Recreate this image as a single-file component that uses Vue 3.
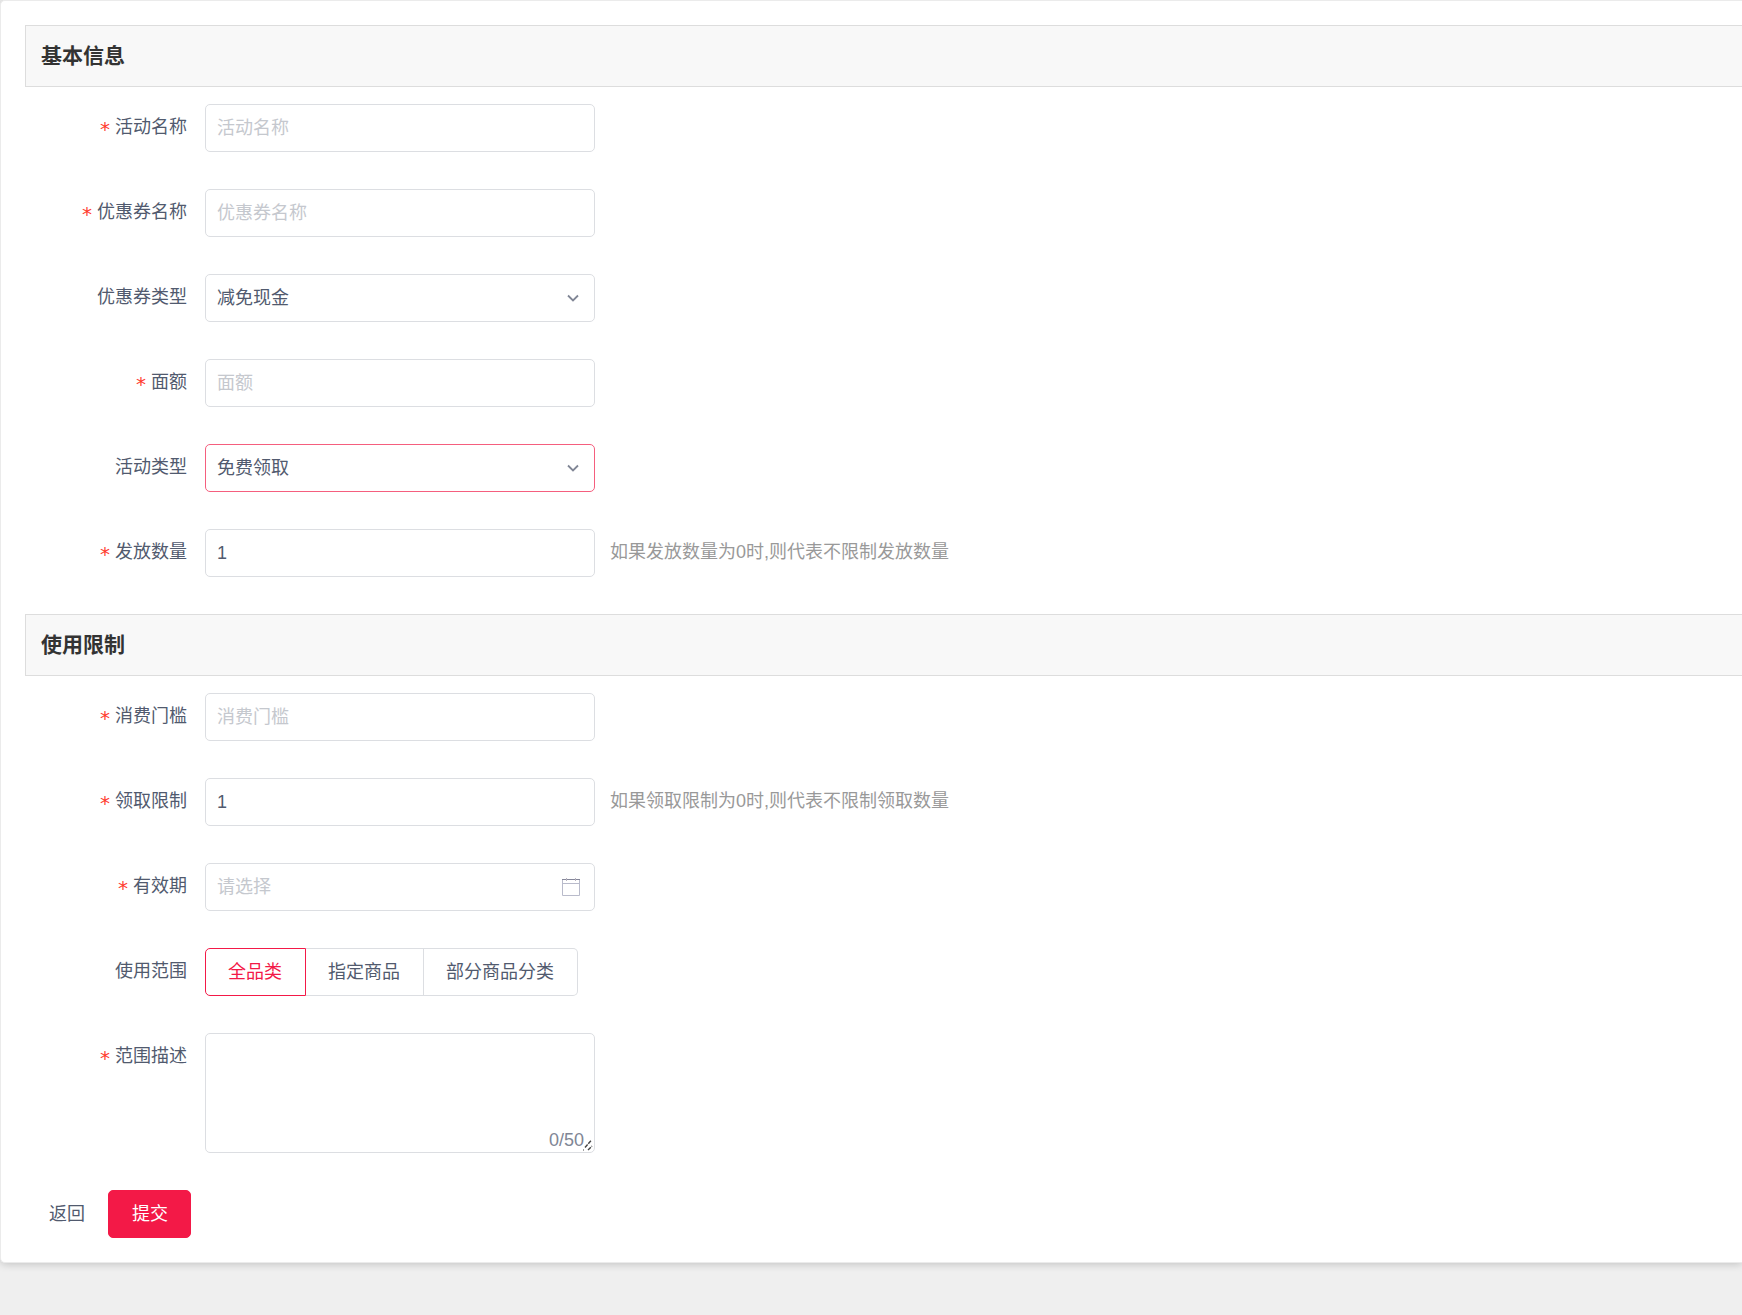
<script setup>
import { reactive } from 'vue'

const form = reactive({
  name: '',
  couponName: '',
  couponType: 'cash',
  amount: '',
  activityType: 'free',
  total: '1',
  threshold: '',
  limit: '1',
  period: '',
  scope: 'all',
  desc: '',
})

const sections = [
  {
    title: '基本信息',
    fields: [
      { key: 'name', label: '活动名称', kind: 'text', required: true, placeholder: '活动名称' },
      { key: 'couponName', label: '优惠券名称', kind: 'text', required: true, placeholder: '优惠券名称' },
      { key: 'couponType', label: '优惠券类型', kind: 'select', options: [{ value: 'cash', label: '减免现金' }] },
      { key: 'amount', label: '面额', kind: 'text', required: true, placeholder: '面额' },
      { key: 'activityType', label: '活动类型', kind: 'select', active: true, options: [{ value: 'free', label: '免费领取' }] },
      { key: 'total', label: '发放数量', kind: 'text', required: true, hint: '如果发放数量为0时,则代表不限制发放数量' },
    ],
  },
  {
    title: '使用限制',
    fields: [
      { key: 'threshold', label: '消费门槛', kind: 'text', required: true, placeholder: '消费门槛' },
      { key: 'limit', label: '领取限制', kind: 'text', required: true, hint: '如果领取限制为0时,则代表不限制领取数量' },
      { key: 'period', label: '有效期', kind: 'date', required: true, placeholder: '请选择' },
      {
        key: 'scope',
        label: '使用范围',
        kind: 'radio',
        options: [
          { value: 'all', label: '全品类' },
          { value: 'goods', label: '指定商品' },
          { value: 'category', label: '部分商品分类' },
        ],
      },
      { key: 'desc', label: '范围描述', kind: 'textarea', required: true },
    ],
  },
]
</script>

<template>
  <div class="page">
    <main class="card">
      <form @submit.prevent>
        <section v-for="section in sections" :key="section.title">
          <h2 class="title">{{ section.title }}</h2>
          <div class="fields">
            <div v-for="f in section.fields" :key="f.key" class="row">
              <span v-if="f.kind === 'radio'" :id="f.key + '-label'" class="label">{{ f.label }}</span>
              <label v-else class="label" :for="f.key"><span v-if="f.required" class="star">*</span>{{ f.label }}</label>

              <div v-if="f.kind === 'radio'" class="radios" role="radiogroup" :aria-labelledby="f.key + '-label'">
                <label v-for="o in f.options" :key="o.value" class="radio" :class="{ checked: form[f.key] === o.value }">
                  <input v-model="form[f.key]" type="radio" :name="f.key" :value="o.value" />{{ o.label }}
                </label>
              </div>

              <div v-else class="control">
                <template v-if="f.kind === 'select'">
                  <select :id="f.key" v-model="form[f.key]" class="box" :class="{ active: f.active }">
                    <option v-for="o in f.options" :key="o.value" :value="o.value">{{ o.label }}</option>
                  </select>
                  <svg class="icon" width="18" height="18" viewBox="0 0 18 18" aria-hidden="true">
                    <path d="M4 6.5 9 11.5 14 6.5" fill="none" stroke="#808695" stroke-width="1.8" />
                  </svg>
                </template>
                <template v-else-if="f.kind === 'textarea'">
                  <textarea :id="f.key" v-model="form[f.key]" class="box area" maxlength="50"></textarea>
                  <span class="count">{{ form[f.key].length }}/50</span>
                  <svg class="grip" width="10" height="12" viewBox="0 0 10 12" aria-hidden="true">
                    <path d="M2 8.5 8.5 1M5 11 9 7" fill="none" stroke="#444" stroke-width="1.4" stroke-dasharray="4 1" />
                    <path d="M0 11h1" stroke="#444" />
                  </svg>
                </template>
                <template v-else>
                  <input :id="f.key" v-model="form[f.key]" class="box" type="text" :placeholder="f.placeholder" />
                  <svg v-if="f.kind === 'date'" class="icon calendar" width="20" height="20" viewBox="0 0 20 20" aria-hidden="true">
                    <path d="M1.5 3V18.5H18.5V3M1 6.5H19" fill="none" stroke="#b9bbcb" />
                    <path d="M1 2.5H19" stroke="#85879a" />
                    <path d="M5.5 1V4M14.5 1V4" stroke="#b9b4bf" />
                  </svg>
                </template>
              </div>
              <span v-if="f.hint" class="hint">{{ f.hint }}</span>
            </div>
          </div>
        </section>

        <div class="actions">
          <button type="button" class="btn">返回</button>
          <button type="submit" class="btn primary">提交</button>
        </div>
      </form>
    </main>
  </div>
</template>

<style>
body {
  background: #efefef;
}
</style>

<style scoped>
.page {
  min-height: 100vh;
  background: #efefef;
}

.card,
.card * {
  box-sizing: border-box;
}

.card {
  padding: 24px 0 24px 24px;
  background: #fff;
  border: 1px solid #ebebeb;
  border-right: 0;
  border-radius: 5px 0 0 5px;
  box-shadow: 0 1px 8px rgba(0, 0, 0, 0.2);
  color: #515a6e;
  font: 18px/46px "Liberation Sans", "Noto Sans CJK SC", sans-serif;
}

.title {
  margin: 0;
  padding: 0 15px;
  background: #f8f8f8;
  border: 1px solid #ddd;
  border-right: 0;
  color: #333;
  font-size: 21px;
  line-height: 60px;
}

.fields {
  display: flex;
  flex-direction: column;
  gap: 37px;
  padding: 17px 0 37px;
}

.row {
  display: flex;
  align-items: flex-start;
}

.label {
  width: 180px;
  padding-right: 18px;
  text-align: right;
}

.star {
  display: inline-block;
  margin-right: 5px;
  color: #ff3b30;
  font-family: "DejaVu Sans", sans-serif;
  font-size: 20px;
  line-height: 18px;
  vertical-align: -3px;
}

.control {
  position: relative;
  width: 390px;
}

.box {
  display: block;
  width: 100%;
  height: 48px;
  margin: 0;
  padding: 0 11px;
  appearance: none;
  background: #fff;
  border: 1px solid #dcdee2;
  border-radius: 5px;
  outline: 0;
  color: inherit;
  font: inherit;
}

.box::placeholder {
  color: #c5c8ce;
  opacity: 1;
}

.box.active {
  border-color: #f55e7e;
}

.box.area {
  height: 120px;
  padding: 6px 11px;
  line-height: 27px;
  resize: none;
}

.icon {
  position: absolute;
  top: 15px;
  right: 13px;
  pointer-events: none;
}

.calendar {
  top: 14px;
  right: 14px;
}

.count {
  position: absolute;
  right: 11px;
  bottom: 2px;
  color: #808695;
  line-height: 22px;
}

.grip {
  position: absolute;
  right: 2px;
  bottom: 2px;
}

.hint {
  margin-left: 15px;
  color: #999;
}

.radios {
  display: flex;
}

.radio {
  position: relative;
  height: 48px;
  padding: 0 23px 0 22px;
  border: 1px solid #dcdee2;
  border-left: 0;
  cursor: pointer;
}

.radio:first-child {
  border-left: 1px solid #dcdee2;
  border-radius: 5px 0 0 5px;
}

.radio:last-child {
  border-radius: 0 5px 5px 0;
}

.radio.checked {
  border-color: #f31947;
  color: #f31947;
}

.radio input {
  position: absolute;
  width: 0;
  height: 0;
  margin: 0;
  opacity: 0;
}

.actions {
  display: flex;
}

.btn {
  height: 48px;
  padding: 0 22px 0 23px;
  background: transparent;
  border: 1px solid transparent;
  border-radius: 5px;
  color: inherit;
  font: inherit;
  cursor: pointer;
}

.primary {
  background: #f31947;
  border-color: #f31947;
  color: #fff;
}
</style>
